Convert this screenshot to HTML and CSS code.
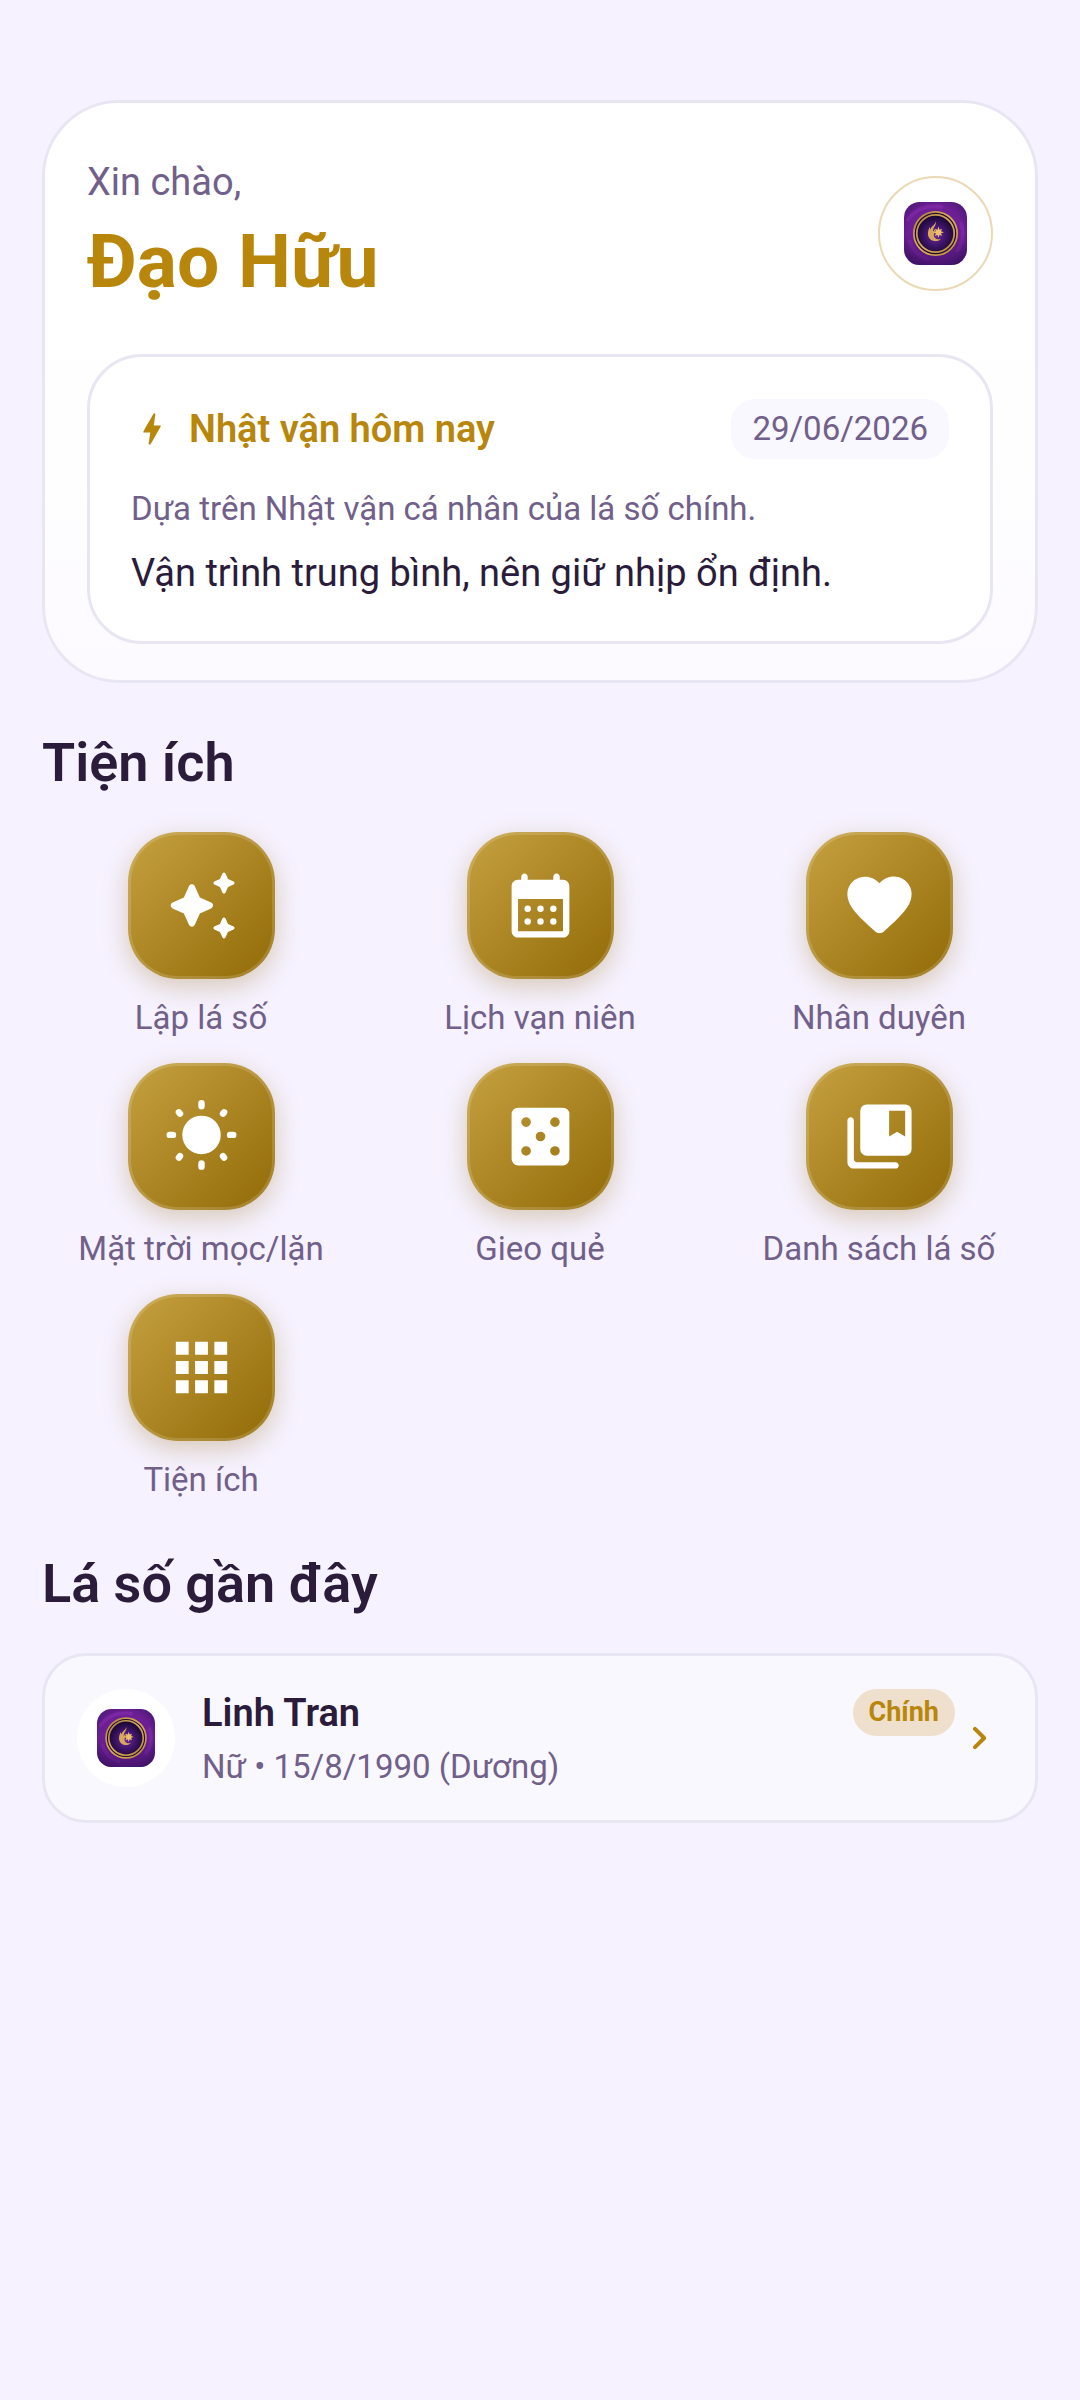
FILE: index.html
```html
<!DOCTYPE html>
<html lang="vi">

<head>
    <meta charset="UTF-8">
    <meta name="viewport" content="width=device-width, initial-scale=1.0">
    <title>Trang chủ</title>
    <link rel="stylesheet" href="styles.css">
</head>

<body>

    <!-- logo dùng chung -->
    <svg class="defs" aria-hidden="true">
        <defs>
            <radialGradient id="nebula" cx="50%" cy="50%" r="72%">
                <stop offset="0" stop-color="#7a1fa0" />
                <stop offset="0.62" stop-color="#6b1f93" />
                <stop offset="1" stop-color="#3f1468" />
            </radialGradient>
            <linearGradient id="nebula-shade" x1="0" y1="0" x2="0" y2="1">
                <stop offset="0.5" stop-color="#2a0a50" stop-opacity="0" />
                <stop offset="1" stop-color="#2a0a50" stop-opacity="0.5" />
            </linearGradient>
            <radialGradient id="disc" cx="50%" cy="55%" r="50%">
                <stop offset="0" stop-color="#6a2a9c" />
                <stop offset="0.5" stop-color="#43166f" />
                <stop offset="1" stop-color="#1d0838" />
            </radialGradient>
            <linearGradient id="gold" x1="0" y1="0" x2="1" y2="1">
                <stop offset="0" stop-color="#b0823f" />
                <stop offset="0.5" stop-color="#dcae5a" />
                <stop offset="1" stop-color="#b88a3c" />
            </linearGradient>
        </defs>
        <symbol id="logo" viewBox="0 0 64 64">
            <rect width="64" height="64" rx="16" fill="url(#nebula)" />
            <path d="M4 18C12 6 26 3 38 5M58 22c3 9 2 20-4 27M6 40c3 9 9 15 18 18" fill="none" stroke="#9a35c0" stroke-width="4" stroke-linecap="round" opacity="0.35" />
            <rect width="64" height="64" rx="16" fill="url(#nebula-shade)" />
            <circle cx="32" cy="32" r="22" fill="#1f0a35" />
            <circle cx="32" cy="32" r="22" fill="none" stroke="url(#gold)" stroke-width="1.8" />
            <circle cx="32" cy="32" r="19" fill="url(#disc)" stroke="url(#gold)" stroke-width="1.8" />
            <path d="M32.500 19.500c.8 4-3.500 6.500-3 10.500.8-.8 1.500-2 1.500-3.200 1 2.200.2 3.700-.6 5.700-.8 3.500 2.600 6.500 7.100 5-2 2-4.500 2.500-6.500 2.200C26 39 23.500 35 24.500 30c.3-1.500 1-3 1.500-4.500l.8 2.500c1-4 5-4.500 5.700-8.500z" fill="#d9a95a" />
            <path d="M35 25l1 3.200 2.600-1-1 2.600 3 1-3 1 1 2.600-2.600-1-1 3-1-3-2.600 1 1-2.600-3-1 3-1-1-2.600 2.600 1z" fill="#eec06c" />
        </symbol>
    </svg>

    <main class="page">
        <section class="hero">
            <header class="hero-top">
                <div>
                    <p class="greeting">Xin chào,</p>
                    <h1 class="name">Đạo Hữu</h1>
                </div>
                <button class="avatar" type="button" aria-label="Tài khoản">
                    <svg><use href="#logo" /></svg>
                </button>
            </header>

            <article class="daily">
                <div class="daily-top">
                    <svg class="bolt" viewBox="0 0 24 24"><path d="M10.670 21c-.35 0-.62-.31-.57-.66L11 14H7.500c-.88 0-.33-.75-.31-.78 1.260-2.230 3.150-5.530 5.650-9.930.1-.18.3-.29.5-.29.35 0 .62.31.57.66l-.9 6.340h3.510c.4 0 .62.19.4.66-3.290 5.740-5.200 9.090-5.750 10.050-.1.18-.29.29-.5.29z" /></svg>
                    <h2 class="daily-title">Nhật vận hôm nay</h2>
                    <time class="date" datetime="2026-06-29">29/06/2026</time>
                </div>
                <p class="daily-note">Dựa trên Nhật vận cá nhân của lá số chính.</p>
                <p class="daily-text">Vận trình trung bình, nên giữ nhịp ổn định.</p>
            </article>
        </section>

        <h2 class="section-title">Tiện ích</h2>
        <nav class="tools">
            <a class="tool" href="#">
                <span class="tile">
                    <svg viewBox="0 0 24 24"><path d="M19.460 8l.79-1.750L22 5.460c.39-.18.39-.73 0-.91l-1.750-.79L19.460 2c-.18-.39-.73-.39-.91 0l-.79 1.750-1.760.79c-.39.18-.39.73 0 .91l1.750.79.79 1.760c.18.39.74.39.92 0zM11.500 9.500L9.910 6c-.35-.78-1.470-.78-1.820 0L6.500 9.500 3 11.090c-.78.36-.78 1.470 0 1.820l3.500 1.590L8.090 18c.36.78 1.470.78 1.820 0l1.590-3.500 3.500-1.590c.78-.36.78-1.470 0-1.820L11.500 9.500zm7.040 6.500l-.79 1.750-1.750.79c-.39.18-.39.73 0 .91l1.750.79.79 1.760c.18.39.73.39.91 0l.79-1.750 1.760-.79c.39-.18.39-.73 0-.91l-1.750-.79-.79-1.760c-.18-.39-.74-.39-.92 0z" /></svg>
                </span>
                <span class="label">Lập lá số</span>
            </a>
            <a class="tool" href="#">
                <span class="tile">
                    <svg viewBox="0 0 24 24">
                        <path fill-rule="evenodd" d="M17 2c-.55 0-1 .45-1 1v1H8V3c0-.55-.45-1-1-1s-1 .45-1 1v1H5c-1.110 0-2 .9-2 2v14c0 1.100.89 2 2 2h14c1.100 0 2-.9 2-2V6c0-1.100-.9-2-2-2h-1V3c0-.55-.45-1-1-1zm2 18H5V10h14v10z" />
                        <circle cx="8" cy="13" r="1" /><circle cx="12" cy="13" r="1" /><circle cx="16" cy="13" r="1" />
                        <circle cx="8" cy="17" r="1" /><circle cx="12" cy="17" r="1" /><circle cx="16" cy="17" r="1" />
                    </svg>
                </span>
                <span class="label">Lịch vạn niên</span>
            </a>
            <a class="tool" href="#">
                <span class="tile">
                    <svg viewBox="0 0 24 24"><path d="M13.350 20.130c-.76.69-1.930.69-2.690-.01l-.11-.1C5.300 15.270 1.870 12.160 2 8.280c.06-1.700.93-3.330 2.340-4.290 2.640-1.800 5.900-.96 7.660 1.100 1.760-2.060 5.020-2.910 7.660-1.100 1.410.96 2.280 2.590 2.340 4.290.14 3.880-3.300 6.990-8.550 11.760l-.1.09z" /></svg>
                </span>
                <span class="label">Nhân duyên</span>
            </a>
            <a class="tool" href="#">
                <span class="tile">
                    <svg viewBox="0 0 24 24">
                        <circle cx="12" cy="11.5" r="6" />
                        <path class="rays" d="M12 1.600v1M12 20.400v1M2.100 11.500h1M20.900 11.500h1M4.950 4.450l.35.4M19.050 4.450l-.35.4M4.950 18.550l.35-.4M19.050 18.550l-.35-.4" />
                    </svg>
                </span>
                <span class="label">Mặt trời mọc/lặn</span>
            </a>
            <a class="tool" href="#">
                <span class="tile">
                    <svg viewBox="0 0 24 24"><path fill-rule="evenodd" d="M5 3h14a2 2 0 0 1 2 2v14a2 2 0 0 1-2 2H5a2 2 0 0 1-2-2V5a2 2 0 0 1 2-2zM6 7.500a1.500 1.500 0 1 0 3 0 1.500 1.500 0 1 0-3 0zM15 7.500a1.500 1.500 0 1 0 3 0 1.500 1.500 0 1 0-3 0zM10.500 12a1.500 1.500 0 1 0 3 0 1.500 1.500 0 1 0-3 0zM6 16.500a1.500 1.500 0 1 0 3 0 1.500 1.500 0 1 0-3 0zM15 16.500a1.500 1.500 0 1 0 3 0 1.500 1.500 0 1 0-3 0z" /></svg>
                </span>
                <span class="label">Gieo quẻ</span>
            </a>
            <a class="tool" href="#">
                <span class="tile">
                    <svg viewBox="0 0 24 24">
                        <path d="M3 6c-.55 0-1 .45-1 1v13c0 1.100.9 2 2 2h13c.55 0 1-.45 1-1s-.45-1-1-1H5c-.55 0-1-.45-1-1V7c0-.55-.45-1-1-1z" />
                        <path fill-rule="evenodd" d="M8 2h12a2 2 0 0 1 2 2v12a2 2 0 0 1-2 2H8a2 2 0 0 1-2-2V4a2 2 0 0 1 2-2zM15 4v8l2.500-1.500L20 12V4z" />
                    </svg>
                </span>
                <span class="label">Danh sách lá số</span>
            </a>
            <a class="tool" href="#">
                <span class="tile">
                    <svg viewBox="0 0 24 24"><path d="M4 4h4v4H4zM10 4h4v4h-4zM16 4h4v4h-4zM4 10h4v4H4zM10 10h4v4h-4zM16 10h4v4h-4zM4 16h4v4H4zM10 16h4v4h-4zM16 16h4v4h-4z" /></svg>
                </span>
                <span class="label">Tiện ích</span>
            </a>
        </nav>

        <h2 class="section-title">Lá số gần đây</h2>
        <a class="chart" href="#">
            <span class="chart-avatar"><svg><use href="#logo" /></svg></span>
            <span class="chart-info">
                <span class="chart-name">Linh Tran</span>
                <span class="chart-meta">Nữ • 15/8/1990 (Dương)</span>
            </span>
            <span class="badge">Chính</span>
            <svg class="chevron" viewBox="0 0 24 24"><path d="M9.290 6.710c-.39.39-.39 1.020 0 1.410L13.170 12l-3.880 3.880c-.39.39-.39 1.020 0 1.410s1.020.39 1.410 0l4.590-4.590c.39-.39.39-1.020 0-1.410L10.700 6.700c-.38-.38-1.020-.38-1.410.01z" /></svg>
        </a>
    </main>

</body>

</html>
```
FILE: styles.css
```css
* {
    box-sizing: border-box;
}

body {
    font-family: Roboto, 'Noto Sans', sans-serif;
    margin: 0;
    background-color: #f6f2ff;
    color: #2a1c3a;
}

h1,
h2,
p {
    margin: 0;
}

a {
    color: inherit;
    text-decoration: none;
}

.defs {
    position: absolute;
    width: 0;
    height: 0;
}

.page {
    padding: 100px 42px 42px;
}

.hero {
    padding: 56px 42px 36px;
    border: 3px solid #e9e6f4;
    border-radius: 77px;
    background: linear-gradient(#ffffff 40%, #fcfaff);
}

.hero-top {
    display: flex;
    justify-content: space-between;
    align-items: center;
}

.greeting {
    font-size: 38px;
    line-height: 46px;
    color: #71608a;
}

.name {
    margin-top: 10px;
    font-size: 75px;
    line-height: 92px;
    font-weight: 700;
    color: #b8860b;
}

.avatar {
    display: flex;
    align-items: center;
    justify-content: center;
    width: 115px;
    height: 115px;
    padding: 0;
    border: 2px solid #ead9b5;
    border-radius: 50%;
    background-color: #fff;
    cursor: pointer;
}

.avatar svg {
    width: 63px;
    height: 63px;
}

.daily {
    margin-top: 47px;
    padding: 42px 41px;
    border: 3px solid #e9e6f4;
    border-radius: 55px;
    background-color: #fff;
}

.daily-top {
    display: flex;
    align-items: center;
}

.bolt {
    width: 42px;
    height: 42px;
    margin-right: 16px;
    fill: #b8860b;
}

.daily-title {
    flex: 1;
    font-size: 38px;
    line-height: 46px;
    font-weight: 600;
    color: #b8860b;
}

.date {
    padding: 9px 21px;
    border-radius: 24px;
    background-color: #f9f7ff;
    font-size: 33px;
    line-height: 42px;
    color: #71608a;
}

.daily-note {
    margin-top: 28px;
    font-size: 33px;
    line-height: 44px;
    color: #71608a;
}

.daily-text {
    margin-top: 16px;
    font-size: 38px;
    line-height: 52px;
}

.section-title {
    margin: 48px 0 37px;
    font-size: 54px;
    line-height: 64px;
    font-weight: 600;
}

.tools {
    display: grid;
    grid-template-columns: repeat(3, 1fr);
    gap: 24px 21px;
    padding-bottom: 3px;
}

.tool {
    display: flex;
    flex-direction: column;
    align-items: center;
    gap: 18px;
}

.tile {
    display: flex;
    align-items: center;
    justify-content: center;
    width: 147px;
    height: 147px;
    border: 3px solid rgba(255, 255, 255, 0.15);
    border-radius: 50px;
    background: linear-gradient(135deg, #c6a13f, #926a08) border-box;
    box-shadow: 0 8px 26px rgba(150, 105, 20, 0.3);
}

.tile svg {
    width: 77px;
    height: 77px;
    fill: #fff;
}

.tile .rays {
    fill: none;
    stroke: #fff;
    stroke-width: 2;
    stroke-linecap: round;
}

.label {
    font-size: 33px;
    line-height: 42px;
    color: #71608a;
}

.chart {
    display: flex;
    align-items: center;
    padding: 33px 32px;
    border: 3px solid #e9e6f4;
    border-radius: 44px;
    background-color: #faf8ff;
}

.chart-avatar {
    display: flex;
    align-items: center;
    justify-content: center;
    width: 98px;
    height: 98px;
    border-radius: 50%;
    background-color: #fff;
}

.chart-avatar svg {
    width: 58px;
    height: 58px;
}

.chart-info {
    display: flex;
    flex: 1;
    flex-direction: column;
    gap: 12px;
    margin-left: 27px;
}

.chart-name {
    font-size: 38px;
    line-height: 46px;
    font-weight: 600;
}

.chart-meta {
    font-size: 33px;
    line-height: 38px;
    color: #71608a;
}

.badge {
    align-self: flex-start;
    padding: 8px 16px;
    border-radius: 24px;
    background-color: #eee0cc;
    font-size: 27px;
    line-height: 31px;
    font-weight: 700;
    color: #b8860b;
}

.chevron {
    width: 48px;
    height: 48px;
    fill: #b8860b;
}
```
